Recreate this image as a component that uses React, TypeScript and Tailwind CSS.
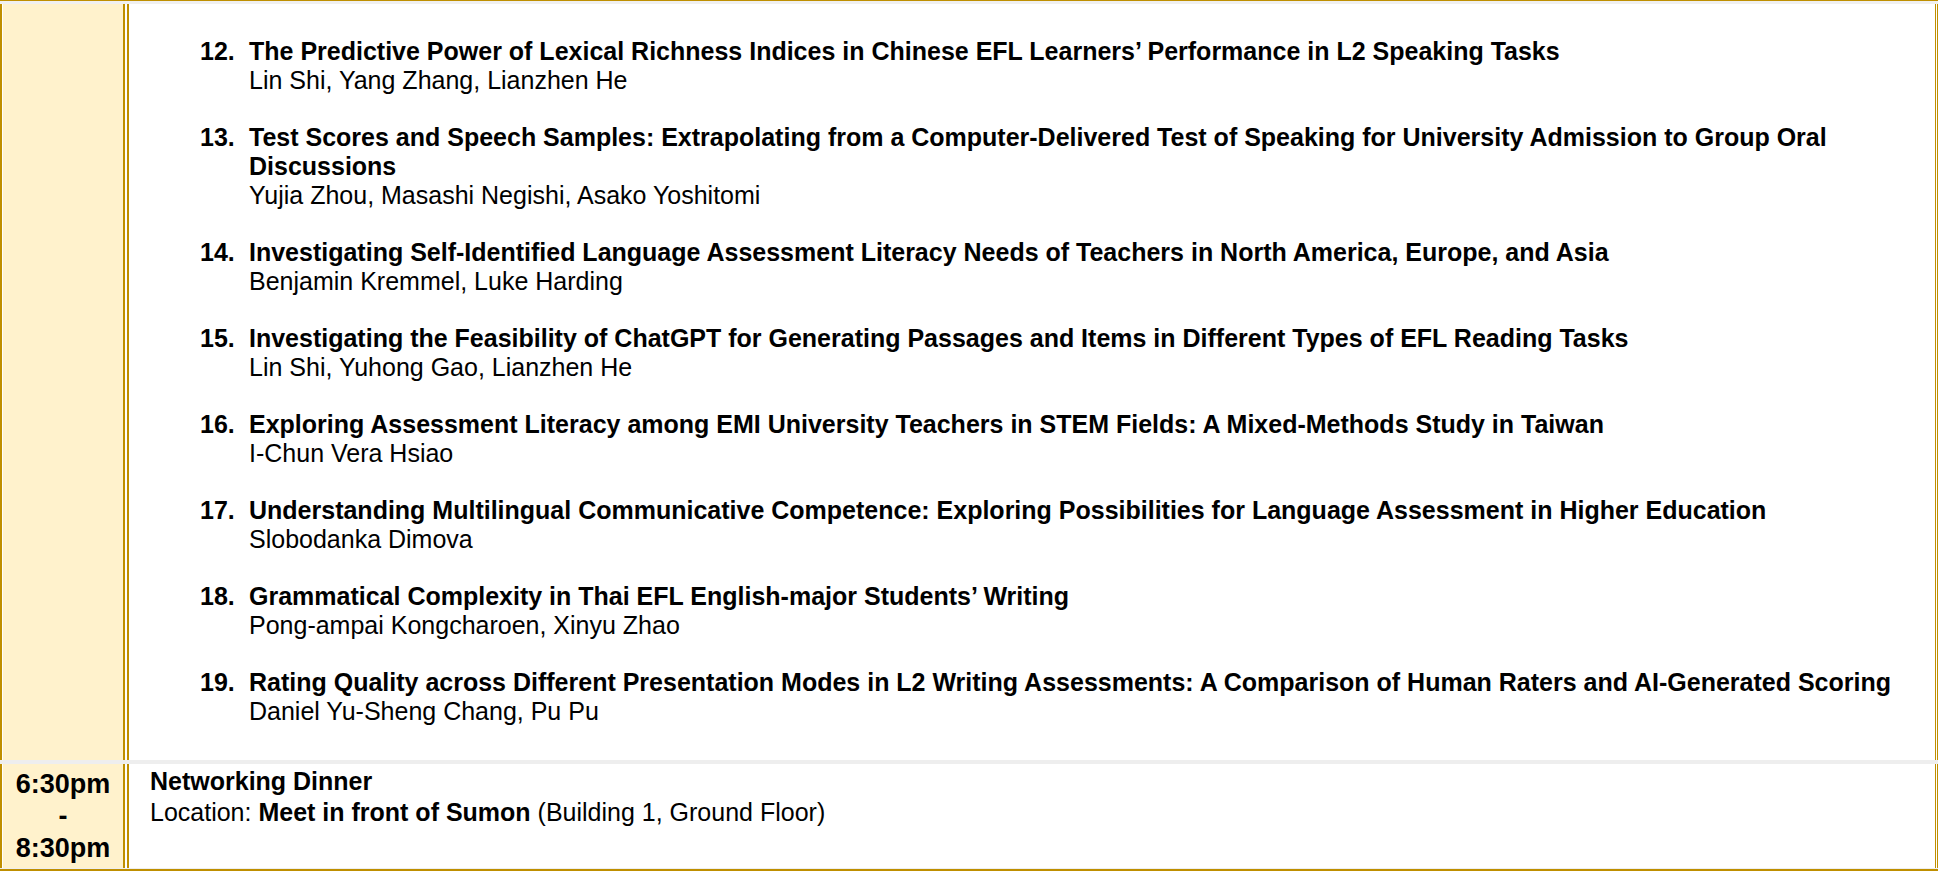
import React from "react";

const papers = [
  {
    no: "12.",
    title:
      "The Predictive Power of Lexical Richness Indices in Chinese EFL Learners’ Performance in L2 Speaking Tasks",
    authors: "Lin Shi, Yang Zhang, Lianzhen He",
  },
  {
    no: "13.",
    title:
      "Test Scores and Speech Samples: Extrapolating from a Computer-Delivered Test of Speaking for University Admission to Group Oral Discussions",
    authors: "Yujia Zhou, Masashi Negishi, Asako Yoshitomi",
  },
  {
    no: "14.",
    title:
      "Investigating Self-Identified Language Assessment Literacy Needs of Teachers in North America, Europe, and Asia",
    authors: "Benjamin Kremmel, Luke Harding",
  },
  {
    no: "15.",
    title:
      "Investigating the Feasibility of ChatGPT for Generating Passages and Items in Different Types of EFL Reading Tasks",
    authors: "Lin Shi, Yuhong Gao, Lianzhen He",
  },
  {
    no: "16.",
    title:
      "Exploring Assessment Literacy among EMI University Teachers in STEM Fields: A Mixed-Methods Study in Taiwan",
    authors: "I-Chun Vera Hsiao",
  },
  {
    no: "17.",
    title:
      "Understanding Multilingual Communicative Competence: Exploring Possibilities for Language Assessment in Higher Education",
    authors: "Slobodanka Dimova",
  },
  {
    no: "18.",
    title: "Grammatical Complexity in Thai EFL English-major Students’ Writing",
    authors: "Pong-ampai Kongcharoen, Xinyu Zhao",
  },
  {
    no: "19.",
    title:
      "Rating Quality across Different Presentation Modes in L2 Writing Assessments: A Comparison of Human Raters and AI-Generated Scoring",
    authors: "Daniel Yu-Sheng Chang, Pu Pu",
  },
];

function LeftEdge() {
  return (
    <>
      <div className="w-[2px] bg-[#bf8f00]" />
      <div className="w-px bg-white" />
    </>
  );
}

function MidRule() {
  return (
    <>
      <div className="w-[2px] bg-[#bf8f00]" />
      <div className="w-[2px] bg-white" />
      <div className="w-[2px] bg-[#bf8f00]" />
    </>
  );
}

function RightEdge() {
  return (
    <>
      <div className="w-px bg-[#bf8f00]" />
      <div className="w-px bg-white" />
      <div className="w-px bg-[#bf8f00]" />
    </>
  );
}

export default function App() {
  return (
    <div className="w-[1938px] h-[874px] bg-white flex flex-col font-['Liberation_Sans',Arial,sans-serif] text-black">
      <div className="h-px bg-[#bf8f00]" />
      <div className="h-[3px] bg-[#f0f0f0]" />

      <div className="h-[756px] flex">
        <LeftEdge />
        <div className="w-[120px] bg-[#fff2cc]" />
        <MidRule />
        <div className="flex-1 pl-[71px] pr-[24px] pt-[33px] flex flex-col gap-[28px] text-[25px] leading-[29px]">
          {papers.map((p) => (
            <div key={p.no} className="flex">
              <span className="w-[49px] shrink-0 font-bold">{p.no}</span>
              <div className="flex flex-col">
                <span className="font-bold">{p.title}</span>
                <span>{p.authors}</span>
              </div>
            </div>
          ))}
        </div>
        <RightEdge />
      </div>

      <div className="h-[4px] bg-[#eeeeee]" />

      <div className="h-[104px] flex">
        <LeftEdge />
        <div className="w-[120px] bg-[#fff2cc] pt-[4px] flex flex-col items-center font-bold text-[27px] leading-[32px]">
          <span>6:30pm</span>
          <span>-</span>
          <span>8:30pm</span>
        </div>
        <MidRule />
        <div className="flex-1 pl-[21px] pt-[2px] flex flex-col text-[25px] leading-[31px]">
          <span className="font-bold">Networking Dinner</span>
          <span>
            Location: <b>Meet in front of Sumon</b> (Building 1, Ground Floor)
          </span>
        </div>
        <RightEdge />
      </div>

      <div className="h-px bg-[#eeeeee]" />
      <div className="h-[2px] bg-[#bf8f00]" />
      <div className="h-[3px] bg-white" />
    </div>
  );
}
